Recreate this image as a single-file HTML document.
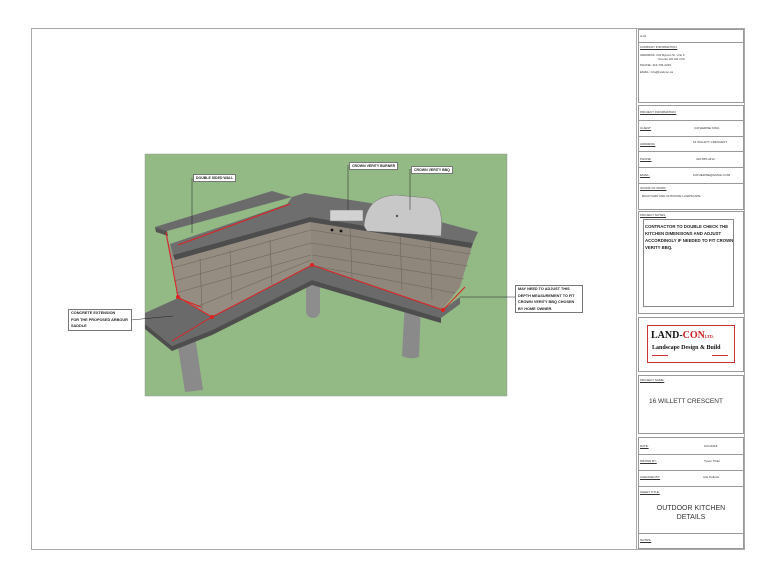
<!DOCTYPE html>
<html><head><meta charset="utf-8"><style>
body{margin:0;width:768px;height:576px;background:#fff;overflow:hidden;font-family:"Liberation Sans",sans-serif;}
.abs{position:absolute;}
.box{position:absolute;border:1px solid #999;box-sizing:border-box;}
.t{position:absolute;font-size:3px;color:#333;white-space:nowrap;}
.u{text-decoration:underline;}
.lab{position:absolute;font-size:4px;font-weight:bold;color:#222;background:#fff;border:1px solid #777;line-height:6px;padding:0 2px;}
</style></head><body>
<div class="box" style="left:31px;top:28px;width:714px;height:522px;border-color:#aaa"></div>
<div class="abs" style="left:636px;top:28px;width:1px;height:522px;background:#aaa"></div>
<div class="box" style="left:638px;top:29px;width:106px;height:14px"></div><div class="t" style="left:640px;top:34px">A-01</div>
<div class="box" style="left:638px;top:42px;width:106px;height:61px"></div>
<div class="t u" style="left:640px;top:45px">COMPANY INFORMATION:</div>
<div class="t" style="left:640px;top:53px">ADDRESS: 243 Bynam St. Unit 6</div>
<div class="t" style="left:658px;top:57px">Toronto,ON  M4 1X9</div>
<div class="t" style="left:640px;top:63px">PHONE: 416-736-2220</div>
<div class="t" style="left:640px;top:70px">EMAIL: info@landcon.ca</div>
<div class="box" style="left:638px;top:105px;width:106px;height:105px"></div>
<div class="t u" style="left:640px;top:110px">PROJECT INFORMATION:</div>
<div class="abs" style="left:638px;top:120px;width:106px;height:1px;background:#999"></div>
<div class="t u" style="left:640px;top:126px">CLIENT:</div><div class="t" style="left:694px;top:126px">CATHERINE KING</div>
<div class="abs" style="left:638px;top:136px;width:106px;height:1px;background:#999"></div>
<div class="t u" style="left:640px;top:142px">ADDRESS:</div><div class="t" style="left:693px;top:140px">16 WILLETT CRESCENT</div>
<div class="abs" style="left:638px;top:151px;width:106px;height:1px;background:#999"></div>
<div class="t u" style="left:640px;top:157px">PHONE:</div><div class="t" style="left:696px;top:157px">416-555-4412</div>
<div class="abs" style="left:638px;top:167px;width:106px;height:1px;background:#999"></div>
<div class="t u" style="left:640px;top:173px">EMAIL:</div><div class="t" style="left:693px;top:173px">KATHERINE@GMAIL.COM</div>
<div class="abs" style="left:638px;top:183px;width:106px;height:1px;background:#999"></div>
<div class="t u" style="left:640px;top:186px">SCOPE OF WORK:</div>
<div class="t" style="left:642px;top:194px">BACKYARD AND OUTDOOR LANDSCAPE</div>
<div class="box" style="left:638px;top:211px;width:106px;height:103px"></div>
<div class="t u" style="left:640px;top:213px">PROJECT NOTES:</div>
<div class="box" style="left:643px;top:219px;width:91px;height:88px;border-color:#888"></div>
<div class="abs" style="left:645px;top:223px;font-size:4.3px;font-weight:bold;line-height:7px;color:#222">CONTRACTOR TO DOUBLE CHECK THE<br>KITCHEN DIMENSIONS AND ADJUST<br>ACCORDINGLY IF NEEDED TO FIT CROWN<br>VERITY BBQ.</div>
<div class="box" style="left:638px;top:317px;width:106px;height:55px"></div>
<div class="abs" style="left:647px;top:325px;width:88px;height:38px;border:1px solid #c33;box-sizing:border-box;background:#fff"></div>
<div class="abs" style="left:651px;top:330px;font:bold 10px 'Liberation Serif',serif;color:#111">LAND-<span style="color:#c22">CON</span><span style="font-size:4px;color:#c22">LTD.</span></div>
<div class="abs" style="left:652px;top:345px;font:bold 6px 'Liberation Serif',serif;color:#111">Landscape Design &amp; Build</div>
<div class="abs" style="left:652px;top:355px;width:16px;height:1px;background:#c33"></div><div class="abs" style="left:712px;top:355px;width:16px;height:1px;background:#c33"></div>
<div class="box" style="left:638px;top:375px;width:106px;height:59px"></div>
<div class="t u" style="left:640px;top:378px">PROJECT NAME:</div>
<div class="abs" style="left:649px;top:398px;font-size:6.5px;color:#333">16 WILLETT CRESCENT</div>
<div class="box" style="left:638px;top:437px;width:106px;height:112px"></div>
<div class="t u" style="left:640px;top:444px">DATE:</div><div class="t" style="left:704px;top:444px">10/1/2018</div>
<div class="abs" style="left:638px;top:454px;width:106px;height:1px;background:#999"></div>
<div class="t u" style="left:640px;top:459px">DRAWN BY:</div><div class="t" style="left:704px;top:459px">Tyson Tilder</div>
<div class="abs" style="left:638px;top:470px;width:106px;height:1px;background:#999"></div>
<div class="t u" style="left:640px;top:475px">CHECKED BY:</div><div class="t" style="left:703px;top:475px">Arie Pollock</div>
<div class="abs" style="left:638px;top:486px;width:106px;height:1px;background:#999"></div>
<div class="t u" style="left:640px;top:490px">SHEET TITLE:</div>
<div class="abs" style="left:638px;top:504px;width:106px;text-align:center;font-size:7px;line-height:9px;color:#333">OUTDOOR KITCHEN<br>DETAILS</div>
<div class="abs" style="left:638px;top:533px;width:106px;height:1px;background:#999"></div>
<div class="t u" style="left:640px;top:538px">NOTES:</div>
<svg class="abs" style="left:0;top:0" width="768" height="576">
<rect x="145" y="154" width="362" height="242" fill="#93b985" stroke="#999" stroke-width="0.5"/>
<!-- legs -->
<path d="M177,340 L185,392 L203,390 L195,336Z" fill="#8a8a8a"/>
<rect x="306" y="262" width="14" height="56" rx="7" fill="#8d8d8d"/>
<path d="M405,300 L402,356 Q411,360 419,357 L421,302Z" fill="#8a8a8a"/>
<!-- slab -->
<path d="M145,313 L178,298 L212,317 L312,265 L445,308 L460,297 L460,304 L441,318 L312,280 L212,330 L172,346 L145,324Z" fill="#6a6a6a"/>
<path d="M145,324 L172,346 L212,330 L312,280 L441,318 L441,323 L312,285 L212,335 L172,351 L145,329Z" fill="#4e4e4e"/>
<!-- walls -->
<path d="M165,232 L173,255 L310,217 L312,265 L212,317 L178,298Z" fill="#958c82"/>
<path d="M310,217 L473,243 L460,287 L442,310 L312,265Z" fill="#8f867c"/>
<g stroke="#6e655c" stroke-width="0.6" fill="none">
<path d="M172,268 L311,230 M174,281 L311,243 M176,293 L311,255 M196,307 L311,260 M311,230 L471,254 M311,243 L468,266 M312,255 L464,279 M315,266 L455,293"/>
<path d="M230,250 L232,300 M270,240 L272,285 M200,258 L202,310 M350,225 L352,278 M400,233 L402,290 M430,238 L432,300"/>
</g>
<!-- upper bar -->
<path d="M155,227 L272,191 L292,197 L167,231Z" fill="#6b6b6b"/>
<path d="M155,227 L167,231 L168,236 L156,232Z" fill="#555"/>
<!-- counter -->
<path d="M170,244 L287,204 L292,197 L305,193 L370,203 L478,232 L473,243 L310,217 L173,255Z" fill="#6e6e6e"/>
<path d="M173,255 L310,217 L473,243 L471,248 L310,222 L175,260Z" fill="#4d4d4d"/>
<!-- grill -->
<rect x="330" y="210" width="33" height="11" fill="#d2d2d2" stroke="#777" stroke-width="0.5"/>
<path d="M364,226 C366,205 376,197 395,195 L428,198 C440,201 443,215 441,236 L367,231Z" fill="#c8c8c8" stroke="#777" stroke-width="0.5"/>
<circle cx="397" cy="216" r="1.2" fill="#555"/>
<circle cx="332" cy="230" r="1.4" fill="#111"/><circle cx="341" cy="231" r="1.4" fill="#111"/>
<!-- red dims -->
<g stroke="#d22" stroke-width="1" fill="none">
<path d="M178,245 L290,204 M166,232 L178,297 L212,317 L312,265 L443,310 L465,287 M172,341 L210,318 M178,298 L201,307"/>
</g>
<g fill="#d22"><circle cx="178" cy="297" r="2"/><circle cx="212" cy="317" r="2"/><circle cx="312" cy="265" r="2"/><circle cx="443" cy="310" r="2"/></g>
<g stroke="#222" stroke-width="0.5"><path d="M192,178 L192,233 M348,165 L348,210 M410,169 L410,210 M131,320 L173,316 M460,297 L516,297"/></g>
</svg>
<div class="lab" style="left:193px;top:174px;font-size:3.5px">DOUBLE SIDED WALL</div>
<div class="lab" style="left:349px;top:162px;font-size:3.5px">CROWN VERITY BURNER</div>
<div class="lab" style="left:411px;top:166px;font-size:3.5px">CROWN VERITY BBQ</div>
<div class="lab" style="left:68px;top:309px;width:58px;height:20px;font-size:3.8px;line-height:6.5px">CONCRETE EXTENSION<br>FOR THE PROPOSED ARBOUR<br>SADDLE</div>
<div class="lab" style="left:515px;top:285px;width:62px;height:26px;font-size:3.8px;line-height:6.5px">MAY NEED TO ADJUST THIS<br>DEPTH MEASUREMENT TO FIT<br>CROWN VERITY BBQ CHOSEN<br>BY HOME OWNER.</div>
</body></html>
